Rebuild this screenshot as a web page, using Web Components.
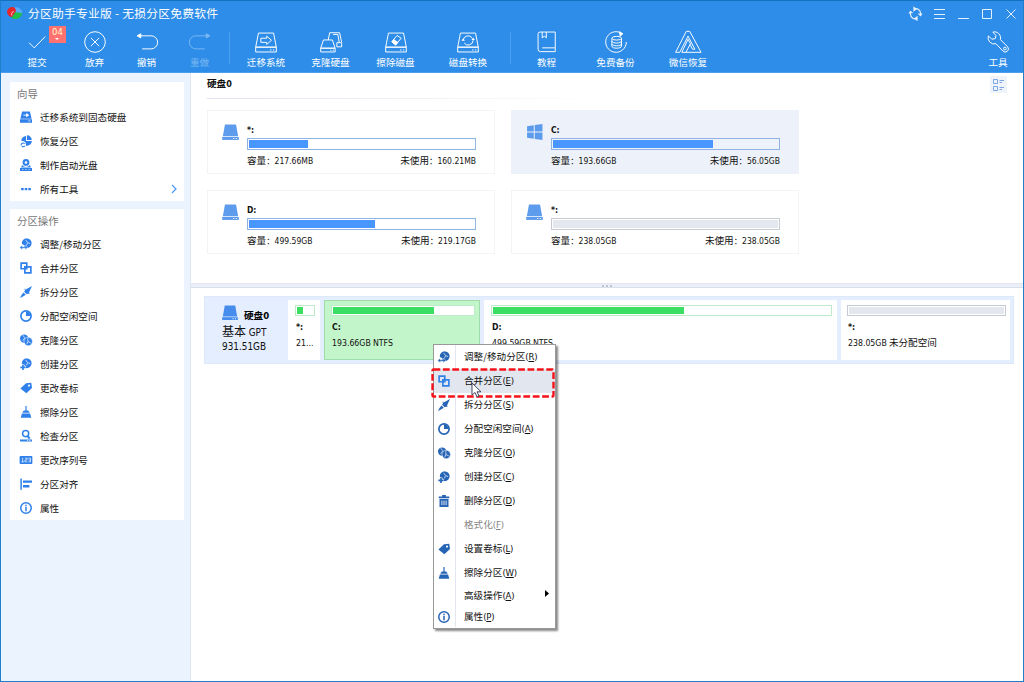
<!DOCTYPE html>
<html lang="zh-CN">
<head>
<meta charset="utf-8">
<title>分区助手专业版</title>
<style>
  body {
    margin: 0;
    width: 1024px;
    height: 682px;
    overflow: hidden;
    font-family: "Noto Sans CJK SC", sans-serif;
    font-size: 9.6px;
    line-height: 1;
    color: #111;
  }
</style>
</head>
<body>
<partition-app></partition-app>

<script>
// 16x16 glyphs, drawn with currentColor
const pie = `<path d="M9 .5A6.500 6.500 0 0 1 15.500 7 6.500 6.500 0 0 1 9 13.500L5.500 12 6 9.500 2.500 8A6.500 6.500 0 0 1 9 .5z" fill="currentColor"/><path d="M7.500 2.500L10 6l3.500 1.500M10 6.500L8.500 10" stroke="#fff" stroke-width=".900" fill="none"/>`;

const ICONS = {
  disk: `<path d="M2.800.5h10.400l2 11H.8z" fill="currentColor"/><path d="M.2 12.200h15.600V15H.2z" fill="currentColor"/><path d="M10.500 13.200h1v1h-1zM13 13.200h1v1h-1z" fill="#fff"/>`,
  windows: `<path d="M1 2.200l6.300-1v5.900H1zM8.200 1L15.500 0v7.100H8.200zM1 8h6.300v5.900L1 12.900zM8.200 8h7.300v7l-7.300-1z" fill="currentColor"/>`,
  migrate: `<path d="M2.800.8h10.400l2.300 9.400H.5zM0 11h16v4.500H0z" fill="currentColor"/><path d="M4.500 5.500H9M8.800 3.500L11.500 5.500 8.800 7.500z" stroke="#fff" stroke-width="1.200" fill="#fff"/><path d="M11 13.200h3" stroke="#fff"/>`,
  recover: `<path d="M9.200.3v6.500h6.500A6.500 6.500 0 0 0 9.200.3zM8 1.300v6.900l5.500 4.800A6.600 6.600 0 0 0 15.800 8H8zM8 1.300A6.500 6.500 0 0 0 1.800 8c2.500 0 4.500 0 5.500 2l1 4.500c2 0 3.500-.5 5-1.800L8 8z" fill="currentColor"/><path d="M1.500 14a3 3 0 0 1 4.800-2.700M6.500 14.500a3 3 0 0 1-4 .5" stroke="currentColor" stroke-width="1.400" fill="none"/>`,
  boot: `<circle cx="8" cy="4.600" r="4.500" fill="currentColor"/><circle cx="8" cy="4.600" r="1.700" fill="#fff"/><path d="M2.800 8l-1.500 3.200h13.400L13.200 8a6.300 6.300 0 0 1-10.400 0zM0 12h16v4H0z" fill="currentColor"/><path d="M3 14h1.500M7.200 14h1.500M11.500 14H13" stroke="#fff"/>`,
  more: `<path d="M1.500 6.500h3.400v3H1.500zM6.300 6.500h3.400v3H6.300zM11.100 6.500h3.400v3h-3.400z" fill="currentColor"/>`,
  resize: pie + `<path d="M-.5 12.500L3 9.500v2h4v-2l3.500 3L7 15.500v-2H3v2z" fill="currentColor" stroke="#fff" stroke-width=".5"/>`,
  merge: `<path d="M1.500 1.500H9V9H1.500zM6.500 6.500H14.500V14.500H6.500z" fill="none" stroke="currentColor" stroke-width="2.200"/>`,
  split: `<path d="M16 0L11.500 9.500 9 11 5.500 7.500 7 5zM4.700 8.500L7.700 11.500 4 14 0 16 2 12z" fill="currentColor"/><path d="M6.500 3.500l1 3M13 9.500l-3.500.5" stroke="currentColor"/>`,
  allocate: `<circle cx="8" cy="8" r="6.800" fill="none" stroke="currentColor" stroke-width="2.300"/><path d="M8 2v6h6A6 6 0 0 0 8 2z" fill="currentColor"/>`,
  clone: `<circle cx="5.500" cy="6" r="5.500" fill="currentColor"/><path d="M3.500 1.500l3 3.500-3 4" stroke="#fff" stroke-width=".900" fill="none"/><circle cx="11" cy="10" r="5.600" fill="currentColor" stroke="#fff" stroke-width=".700"/><path d="M10.500 5.500v4.500l4 2M10.500 10l-1.500 3.500" stroke="#fff" stroke-width=".900" fill="none"/>`,
  create: pie + `<path d="M4 8.500V16M0 12.500h8" stroke="#fff" stroke-width="3.600"/><path d="M4 9v7M.5 12.500h7" stroke="currentColor" stroke-width="2.200"/>`,
  tag: `<path d="M8 1.500l7-.5 1 7L8.500 15 .5 8.500z" fill="currentColor"/><circle cx="12" cy="4.800" r="1.400" fill="#fff"/>`,
  wipe: `<path d="M7.200 0h1.600v6H11l2 3H3l2-3h2.200zM2.500 10h11l1.500 5.500H1z" fill="currentColor"/>`,
  check: `<circle cx="7.500" cy="4.800" r="4.100" fill="none" stroke="currentColor" stroke-width="2"/><path d="M10 8l3 3.500M0 14h16" stroke="currentColor" stroke-width="2.600"/><path d="M9.500 14h1.500M12.500 14H14" stroke="#fff"/>`,
  serial: `<rect x="-.5" y="2.800" width="17" height="10.400" rx="1.200" fill="currentColor"/><path d="M2.500 5.500h1v5M1.800 10.500h3.500M6.500 5.500h3V8h-3v2.500h3.300M11 5.500h3v5h-3M11.500 8H14" stroke="#fff" stroke-width=".900" fill="none"/>`,
  align: `<path d="M1.500.5v15" stroke="currentColor" stroke-width="2"/><path d="M4 3.200h12v3.200H4zM4 9.300h8.500v3.200H4z" fill="currentColor"/>`,
  info: `<circle cx="8" cy="8" r="7" fill="none" stroke="currentColor" stroke-width="2"/><path d="M8 3.700v2M8 6.800v5.500" stroke="currentColor" stroke-width="2"/>`,
  trash: `<path d="M5.500 0h5v2H15v2.200H1V2h4.500zM2 5.200h12V16H2z" fill="currentColor"/><path d="M5.200 7.500v6M8 7.500v6M10.800 7.500v6" stroke="#fff" stroke-width="1.100"/>`
};

// 32x32 outline glyphs for the toolbar
const drive = `<path d="M5 3h22l4 20.500H1zM1 23.500h30v7H1z"/><path d="M22 27.500h2M26 27.500h2"/>`;

const TOOLS = {
  commit: `<path d="M4.500 17l7.500 7.500L28 8"/>`,
  discard: `<circle cx="16" cy="16" r="15"/><path d="M10 10l12 12M22 10L10 22"/>`,
  undo: `<path d="M4 7h18a9.500 9.500 0 0 1 0 19H9"/><path d="M7 4v6L1.500 7z" fill="currentColor"/>`,
  redo: `<path d="M28 7H10a9.500 9.500 0 0 0 0 19h13"/><path d="M25 4v6l5.500-3z" fill="currentColor"/>`,
  migrate: drive + `<path d="M8.500 10.500h8.500V7.500l7 6-7 6v-3H8.500z"/>`,
  clone: `<path d="M5 13h13l4 12H1zM1 25h21v5.500H1zM15 28h1.500M18.500 28H20"/><path d="M12 13l2-10.500h14.500l3 14V23h-7v-6h6M28 17L26 5h-7"/>`,
  wipe: drive + `<path d="M10 15.500l7.500-9 6 4-8 9.500z"/><path d="M12.700 12.500l6 4.200-3.200 3.800-5.500-4.500z" fill="currentColor"/>`,
  convert: drive + `<path d="M9 13.500a7.200 7.200 0 0 1 13-3.500M23.500 13.500A7.200 7.200 0 0 1 10.500 17.500"/><path d="M21 13h5l-2.500-3.500zM6.500 14h5L9 10.500z" fill="currentColor" stroke="none"/>`,
  book: `<path d="M28 24V1.500H6A3 3 0 0 0 3 4v22.500A3.500 3.500 0 0 0 6.500 30H28v-6M9 1.500v8.500l3-2.500 3 2.500V1.500"/><path d="M9 24.500h19"/>`,
  backup: `<path d="M23.500 3A15 15 0 1 0 31 16"/><path d="M21 1l5 3-4 3.500z" fill="currentColor"/><ellipse cx="17" cy="10.500" rx="7" ry="2.700"/><path d="M10 10.500V22c0 4 14 4 14 0V10.500M10 14.500c0 4 14 4 14 0M10 18.500c0 4 14 4 14 0"/>`,
  wechat: `<path d="M13.500.500h5L35 31H13l6-11.500 3.500 7H26L16 7.500 4 31H-2z"/><path d="M13 31h-6L16 12l4 7.500"/>`,
  wrench: `<path d="M8.500 1.500l4.500 5-1 4.500-5 1L2 7a9 9 0 0 0 11 11.500L23 29a4.300 4.300 0 0 0 7-6L19.500 12.500A9 9 0 0 0 8.500 1.500z"/><circle cx="26" cy="25.500" r="2"/>`
};

// Latin runs are set smaller than the Chinese text beside them
const mixed = (text) => text
  .replace(/[A-Za-z0-9.()*:]+/g, (run) => `<span class="en">${run}</span>`)
  .replace("：", `<span class="colon">：</span>`);

const MIXED_STYLES = /* css */`
  .en {
    font-family: "DejaVu Sans Condensed", "DejaVu Sans", sans-serif;
    font-stretch: condensed;
    font-size: var(--en-size, 8.5px);
  }
  .colon {
    font-family: "Noto Sans CJK TC", sans-serif;
    font-size: 8.4px;
  }
`;

class AppIcon extends HTMLElement {
  constructor() {
    super();
    this.attachShadow({ mode: "open" });
  }

  static get styles() {
    return /* css */`
      :host {
        display: block;
        flex: none;
        width: var(--icon-size, 12px);
        height: var(--icon-size, 12px);
      }
      svg {
        display: block;
        width: 100%;
        height: 100%;
        overflow: visible;
      }
    `;
  }

  connectedCallback() {
    const tool = this.getAttribute("tool");
    this.shadowRoot.innerHTML = /* html */`
    <style>${AppIcon.styles}</style>
    ${tool
      ? `<svg viewBox="0 0 32 32" fill="none" stroke="currentColor" stroke-width="1.400">${TOOLS[tool]}</svg>`
      : `<svg viewBox="0 0 16 16">${ICONS[this.getAttribute("name")]}</svg>`}`;
  }
}

class ToolButton extends HTMLElement {
  constructor() {
    super();
    this.attachShadow({ mode: "open" });
  }

  static get styles() {
    return /* css */`
      :host {
        --icon-size: 22px;
        display: flex;
        flex-direction: column;
        align-items: center;
        width: 40px;
        flex: none;
        position: relative;
        color: #fff;
        white-space: nowrap;
      }
      :host([disabled]) { color: #7bb8f2; }
      .label { margin-top: 3px; line-height: 12px; }
      .badge {
        position: absolute;
        left: 32px;
        top: -5px;
        width: 17px;
        height: 17px;
        background: #ff7272;
        color: #fff6c8;
        font: 8.500px/12px "DejaVu Sans", sans-serif;
        text-align: center;
      }
      .badge::after {
        content: "";
        position: absolute;
        left: 6px;
        top: 12px;
        border: 2.500px solid transparent;
        border-top-color: #fff;
        border-bottom: 0;
      }
    `;
  }

  connectedCallback() {
    const badge = this.getAttribute("badge");
    this.shadowRoot.innerHTML = /* html */`
    <style>${ToolButton.styles}</style>
    <app-icon tool="${this.getAttribute("icon")}"></app-icon>
    <div class="label"><slot></slot></div>
    ${badge ? `<div class="badge">${badge}</div>` : ""}`;
  }
}

class AppHeader extends HTMLElement {
  constructor() {
    super();
    this.attachShadow({ mode: "open" });
  }

  static get styles() {
    return /* css */`
      :host {
        display: flex;
        flex-direction: column;
        height: 72px;
        flex: none;
        background: #2e8de8;
        border-bottom: 1px solid #4a9eed;
        box-sizing: border-box;
        color: #fff;
      }
      .title {
        display: flex;
        align-items: center;
        height: 23px;
        padding: 0 7px 0 6px;
        font-size: 11.800px;
        letter-spacing: 0.220px;
      }
      .logo { width: 16px; height: 14px; margin-right: 5px; }
      .controls { margin-left: auto; display: block; }
      .tools { display: flex; padding: 7px 5px 0 16px; }
      .sep { width: 1px; height: 32px; margin-top: 1px; background: #4b9ff0; flex: none; }
      .last { margin-left: auto; }
    `;
  }

  connectedCallback() {
    this.shadowRoot.innerHTML = /* html */`
    <style>${AppHeader.styles}</style>
    <div class="title">
      <svg class="logo" viewBox="0 0 16 14">
        <path d="M6 2a6 5 0 0 1 9 5l-5 2-4-3z" fill="#58a9ff"/>
        <path d="M7 6l8 1c0 4-4 6-7 6s-4-2-4-3z" fill="#21c04b"/>
        <path d="M0 5c1-4 6-5 8-3l1 3-4 6C2 11 0 8 0 5z" fill="#e5262c"/>
        <path d="M6.500 5L4.500 7.500 5 9.500" stroke="#ffd9d9" stroke-width=".900" fill="none"/>
      </svg>
      分区助手专业版 - 无损分区免费软件
      <svg class="controls" width="110" height="16" fill="none" stroke="#e4f1fd">
        <g stroke-width="1.200"><path d="M4.500 6.500v3a4.500 4.500 0 0 0 6 4M8.500 4a4.500 4.500 0 0 1 6 4v2"/><path d="M3 8.500l1.500-2L6.500 8M12.500 8.500l2 2 1.500-2"/><path d="M8 2.500l2 1.500-2 1.500zM11 12l-2 1.500 2 1.500z" fill="#fff"/></g>
        <path d="M28 4.500h11M28 9.500h11M28 13.500h11"/>
        <path d="M52 13.500h11"/><path d="M76.500 4.500h9v9h-9z"/><path d="M100.500 4.500l9 9M109.500 4.500l-9 9"/>
      </svg>
    </div>
    <div class="tools">
      <tool-button icon="commit" badge="04">提交</tool-button>
      <tool-button icon="discard" style="margin-left: 17.500px">放弃</tool-button>
      <tool-button icon="undo" style="margin-left: 12px">撤销</tool-button>
      <tool-button icon="redo" style="margin-left: 13px" disabled>重做</tool-button>
      <div class="sep" style="margin-left: 9.500px"></div>
      <tool-button icon="migrate" style="margin-left: 16px">迁移系统</tool-button>
      <tool-button icon="clone" style="margin-left: 24.500px">克隆硬盘</tool-button>
      <tool-button icon="wipe" style="margin-left: 25px">擦除磁盘</tool-button>
      <tool-button icon="convert" style="margin-left: 32.500px">磁盘转换</tool-button>
      <div class="sep" style="margin-left: 22px"></div>
      <tool-button icon="book" style="margin-left: 15.500px">教程</tool-button>
      <tool-button icon="backup" style="margin-left: 29px">免费备份</tool-button>
      <tool-button icon="wechat" style="margin-left: 32.500px">微信恢复</tool-button>
      <tool-button icon="wrench" class="last">工具</tool-button>
    </div>`;
  }
}

class SideItem extends HTMLElement {
  constructor() {
    super();
    this.attachShadow({ mode: "open" });
  }

  static get styles() {
    return /* css */`
      :host {
        display: flex;
        align-items: center;
        gap: 8px;
        height: 24px;
        padding: 0 7px 0 10px;
      }
      app-icon { color: #2f80ea; }
      .label { padding-top: 1px; }
      .arrow { margin-left: auto; }
    `;
  }

  connectedCallback() {
    this.shadowRoot.innerHTML = /* html */`
    <style>${SideItem.styles}</style>
    <app-icon name="${this.getAttribute("icon")}"></app-icon>
    <span class="label"><slot></slot></span>
    ${this.hasAttribute("arrow") ? `<svg class="arrow" width="6" height="10"><path d="M1 1l4 4-4 4" fill="none" stroke="#4a98f5" stroke-width="1.200"/></svg>` : ""}`;
  }
}

class SideGroup extends HTMLElement {
  constructor() {
    super();
    this.attachShadow({ mode: "open" });
  }

  static get styles() {
    return /* css */`
      :host { display: block; background: #fff; }
      .title {
        height: 23px;
        line-height: 23px;
        padding-left: 7px;
        font-size: 10.400px;
        color: #777;
      }
    `;
  }

  connectedCallback() {
    this.shadowRoot.innerHTML = /* html */`
    <style>${SideGroup.styles}</style>
    <div class="title">${this.getAttribute("title-text")}</div>
    <slot></slot>`;
  }
}

class UsageBar extends HTMLElement {
  constructor() {
    super();
    this.attachShadow({ mode: "open" });
  }

  static get styles() {
    return /* css */`
      :host {
        display: block;
        height: 12px;
        box-sizing: border-box;
        border: 1px solid #8fb3e2;
        padding: 1px;
      }
      :host([tone="green"]) { border-color: #bdebc9; background: #fff; }
      :host([tone="gray"]) { border-color: #c6cad2; }
      :host([slim]) { height: 11px; }
      .fill { height: 100%; background: #4a96ff; }
      :host([tone="green"]) .fill { background: #3ade63; }
      :host([tone="gray"]) .fill { background: #e4e7ee; }
    `;
  }

  connectedCallback() {
    this.shadowRoot.innerHTML = /* html */`
    <style>${UsageBar.styles}</style>
    <div class="fill" style="width: ${this.getAttribute("value")}%"></div>`;
  }
}

class VolumeCard extends HTMLElement {
  constructor() {
    super();
    this.attachShadow({ mode: "open" });
  }

  static get styles() {
    return /* css */`
      ${MIXED_STYLES}
      :host {
        --icon-size: 17px;
        display: flex;
        gap: 8px;
        box-sizing: border-box;
        height: 64px;
        padding: 13px 18px 0 14px;
        border: 1px solid #f4f4f5;
      }
      :host([selected]) { background: #edf1f9; border-color: #edf1f9; }
      app-icon { color: #5d9bec; }
      .body { flex: 1; }
      .name { height: 14px; line-height: 10px; font-weight: bold; }
      .facts { display: flex; justify-content: space-between; margin-top: 4px; line-height: 12px; }
    `;
  }

  connectedCallback() {
    const get = (name) => this.getAttribute(name);
    this.shadowRoot.innerHTML = /* html */`
    <style>${VolumeCard.styles}</style>
    <app-icon name="${get("icon") || "disk"}"></app-icon>
    <div class="body">
      <div class="name">${mixed(get("name"))}</div>
      <usage-bar value="${get("value")}" tone="${get("tone") || "blue"}"></usage-bar>
      <div class="facts">
        <span>${mixed("容量：" + get("size"))}</span>
        <span>${mixed("未使用：" + get("free"))}</span>
      </div>
    </div>`;
  }
}

class PartitionBlock extends HTMLElement {
  constructor() {
    super();
    this.attachShadow({ mode: "open" });
  }

  static get styles() {
    return /* css */`
      ${MIXED_STYLES}
      :host {
        --en-size: 8.700px;
        display: block;
        flex: none;
        box-sizing: border-box;
        height: 60px;
        padding: 5px 5px 0 7px;
        background: #fff;
        white-space: nowrap;
      }
      :host([selected]) {
        background: #c3f5ca;
        border: 1px solid #9fdcab;
        padding: 4px 4px 0 6px;
      }
      .name { margin: 4px 1px 0; height: 12px; line-height: 12px; font-weight: bold; }
      .info { margin: 4px 1px 0; height: 12px; line-height: 12px; }
    `;
  }

  connectedCallback() {
    this.shadowRoot.innerHTML = /* html */`
    <style>${PartitionBlock.styles}</style>
    <usage-bar slim tone="${this.getAttribute("tone")}" value="${this.getAttribute("value")}"></usage-bar>
    <div class="name">${mixed(this.getAttribute("name"))}</div>
    <div class="info">${mixed(this.getAttribute("info"))}</div>`;
  }
}

class MenuItem extends HTMLElement {
  constructor() {
    super();
    this.attachShadow({ mode: "open" });
  }

  static get styles() {
    return /* css */`
      ${MIXED_STYLES}
      :host {
        --en-size: 9.500px;
        display: flex;
        align-items: center;
        height: 24px;
        white-space: nowrap;
      }
      :host([active]) { background: #e1e6ef; }
      :host([disabled]) { color: #858585; }
      :host([short]) { height: 21px; }
      .gutter {
        display: flex;
        align-items: center;
        width: 22px;
        height: 100%;
        margin-right: 8px;
        border-right: 1px solid #e3e6f0;
        box-sizing: border-box;
      }
      app-icon { color: #2664b5; margin-left: 4px; }
      :host([active]) app-icon { color: #3080e8; }
      .en { letter-spacing: -0.200px; }
      .arrow { margin: -4px 6px 0 auto; }
    `;
  }

  connectedCallback() {
    const icon = this.getAttribute("icon");
    this.shadowRoot.innerHTML = /* html */`
    <style>${MenuItem.styles}</style>
    <div class="gutter">${icon ? `<app-icon name="${icon}"></app-icon>` : ""}</div>
    <span><slot></slot><span class="en">(<u>${this.getAttribute("key")}</u>)</span></span>
    ${this.hasAttribute("arrow") ? `<svg class="arrow" width="4" height="7"><path d="M0 0l4 3.500L0 7z"/></svg>` : ""}`;
  }
}

class ContextMenu extends HTMLElement {
  constructor() {
    super();
    this.attachShadow({ mode: "open" });
  }

  static get styles() {
    return /* css */`
      :host {
        position: absolute;
        left: 433px;
        top: 344px;
        width: 123px;
        height: 285px;
        box-sizing: border-box;
        background: #fff;
        border: 1px solid #999;
        box-shadow: 2px 2px 2px #0007;
      }
      .marker {
        position: absolute;
        left: -3px;
        top: 23px;
        overflow: visible;
      }
      .cursor {
        position: absolute;
        left: 37px;
        top: 37px;
      }
    `;
  }

  connectedCallback() {
    this.shadowRoot.innerHTML = /* html */`
    <style>${ContextMenu.styles}</style>
    <slot></slot>
    <svg class="marker" width="124" height="30">
      <rect x="1.500" y="1.500" width="121" height="27" rx="1" fill="none" stroke="#f5121a" stroke-width="2.400" stroke-dasharray="6.800 2.600"/>
    </svg>
    <svg class="cursor" width="11" height="16">
      <path d="M1 1v12l3-2.500 2 4.500 2-1-2-4.200h4z" fill="#fff" stroke="#33334d" stroke-width=".900"/>
    </svg>`;
  }
}

class PartitionApp extends HTMLElement {
  constructor() {
    super();
    this.attachShadow({ mode: "open" });
  }

  static get styles() {
    return /* css */`
      ${MIXED_STYLES}
      :host {
        display: flex;
        flex-direction: column;
        box-sizing: border-box;
        width: 1024px;
        height: 682px;
        border: 1px solid #1f7fcb;
        border-top-color: #1471bd;
        background: #fff;
      }
      .content { display: flex; flex: 1; min-height: 0; }
      aside {
        display: flex;
        flex-direction: column;
        gap: 8px;
        width: 190px;
        box-sizing: border-box;
        padding: 9px 6px 0 9px;
        background: #ebf3fe;
        border-right: 1px solid #dde6f3;
      }
      main { flex: 1; min-width: 0; }
      .upper { height: 210px; padding: 0 16px; }
      .head { display: flex; justify-content: space-between; height: 25px; }
      .disk-name { line-height: 20px; font-weight: bold; --en-size: 9px; }
      .rule { height: 1px; width: 400px; background: linear-gradient(90deg, #dfe3ef, #fff); }
      .view { width: 17px; height: 17px; margin-top: 3px; }
      .volumes {
        display: grid;
        grid-template-columns: 288px 288px;
        gap: 16px;
        margin-top: 11px;
      }
      .splitter {
        display: flex;
        justify-content: center;
        align-items: center;
        gap: 2px;
        height: 5px;
        box-sizing: border-box;
        background: #ebeff7;
        border-top: 1px solid #e2e7ef;
        border-bottom: 1px solid #dae0ea;
      }
      .splitter i { width: 2px; height: 2px; background: #bfc5d0; }
      .map {
        display: flex;
        gap: 4px;
        box-sizing: border-box;
        width: 810px;
        height: 68px;
        margin: 8px 0 0 13px;
        padding: 3px;
        border: 1px solid #dce9fb;
        background: #e4eeff;
      }
      .disk { width: 76px; box-sizing: border-box; padding: 5px 0 0 14px; --en-size: 9.900px; white-space: nowrap; }
      .disk-top { display: flex; gap: 6px; height: 19px; --icon-size: 16px; --en-size: 9.500px; font-weight: bold; color: #000; }
      .disk-top app-icon { color: #458cec; }
      .disk-top span { line-height: 20px; }
      .disk-line { height: 15px; line-height: 15px; }
      .disk-line.kind { height: 16px; font-size: 12px; margin-top: -1px; line-height: 16px; }
    `;
  }

  connectedCallback() {
    this.shadowRoot.innerHTML = /* html */`
    <style>${PartitionApp.styles}</style>
    <app-header></app-header>
    <div class="content">
      <aside>
        <side-group title-text="向导">
          <side-item icon="migrate">迁移系统到固态硬盘</side-item>
          <side-item icon="recover">恢复分区</side-item>
          <side-item icon="boot">制作启动光盘</side-item>
          <side-item icon="more" arrow>所有工具</side-item>
        </side-group>
        <side-group title-text="分区操作">
          <side-item icon="resize">调整/移动分区</side-item>
          <side-item icon="merge">合并分区</side-item>
          <side-item icon="split">拆分分区</side-item>
          <side-item icon="allocate">分配空闲空间</side-item>
          <side-item icon="clone">克隆分区</side-item>
          <side-item icon="create">创建分区</side-item>
          <side-item icon="tag">更改卷标</side-item>
          <side-item icon="wipe">擦除分区</side-item>
          <side-item icon="check">检查分区</side-item>
          <side-item icon="serial">更改序列号</side-item>
          <side-item icon="align">分区对齐</side-item>
          <side-item icon="info">属性</side-item>
        </side-group>
      </aside>
      <main>
        <div class="upper">
          <div class="head">
            <div class="disk-name">${mixed("硬盘0")}</div>
            <svg class="view" viewBox="0 0 17 17" fill="none" stroke="#7fa6e4">
              <rect width="17" height="17" fill="#eff3fa" stroke="none"/>
              <path d="M3.500 3.500h4v4h-4zM3.500 10.500h4v4h-4z"/>
              <path d="M9.500 4.500h4.500M9.500 6.500H12M9.500 11.500h4.500M9.500 13.500H12"/>
            </svg>
          </div>
          <div class="rule"></div>
          <div class="volumes">
            <volume-card name="*:" value="26.300" size="217.66MB" free="160.21MB"></volume-card>
            <volume-card name="C:" value="71.300" size="193.66GB" free="56.05GB" icon="windows" selected></volume-card>
            <volume-card name="D:" value="56.200" size="499.59GB" free="219.17GB"></volume-card>
            <volume-card name="*:" value="100" size="238.05GB" free="238.05GB" tone="gray"></volume-card>
          </div>
        </div>
        <div class="splitter"><i></i><i></i><i></i></div>
        <div class="map">
          <div class="disk">
            <div class="disk-top"><app-icon name="disk"></app-icon><span>${mixed("硬盘0")}</span></div>
            <div class="disk-line kind">${mixed("基本 GPT")}</div>
            <div class="disk-line">${mixed("931.51GB")}</div>
          </div>
          <partition-block style="width: 32px" tone="green" value="40" name="*:" info="21..."></partition-block>
          <partition-block style="width: 156px" tone="green" value="72" name="C:" info="193.66GB NTFS" selected></partition-block>
          <partition-block style="width: 353px" tone="green" value="56.800" name="D:" info="499.59GB NTFS"></partition-block>
          <partition-block style="width: 169px; padding-right: 4px; padding-left: 6px" tone="gray" value="100" name="*:" info="238.05GB 未分配空间"></partition-block>
        </div>
      </main>
    </div>
    <context-menu>
      <menu-item icon="resize" key="R">调整/移动分区</menu-item>
      <menu-item icon="merge" key="E" active>合并分区</menu-item>
      <menu-item icon="split" key="S">拆分分区</menu-item>
      <menu-item icon="allocate" key="A">分配空闲空间</menu-item>
      <menu-item icon="clone" key="O">克隆分区</menu-item>
      <menu-item icon="create" key="C">创建分区</menu-item>
      <menu-item icon="trash" key="D">删除分区</menu-item>
      <menu-item key="F" disabled>格式化</menu-item>
      <menu-item icon="tag" key="L">设置卷标</menu-item>
      <menu-item icon="wipe" key="W">擦除分区</menu-item>
      <menu-item key="A" arrow short>高级操作</menu-item>
      <menu-item icon="info" key="P" short>属性</menu-item>
    </context-menu>`;
  }
}

customElements.define("app-icon", AppIcon);
customElements.define("tool-button", ToolButton);
customElements.define("app-header", AppHeader);
customElements.define("side-item", SideItem);
customElements.define("side-group", SideGroup);
customElements.define("usage-bar", UsageBar);
customElements.define("volume-card", VolumeCard);
customElements.define("partition-block", PartitionBlock);
customElements.define("menu-item", MenuItem);
customElements.define("context-menu", ContextMenu);
customElements.define("partition-app", PartitionApp);
</script>
</body>
</html>
